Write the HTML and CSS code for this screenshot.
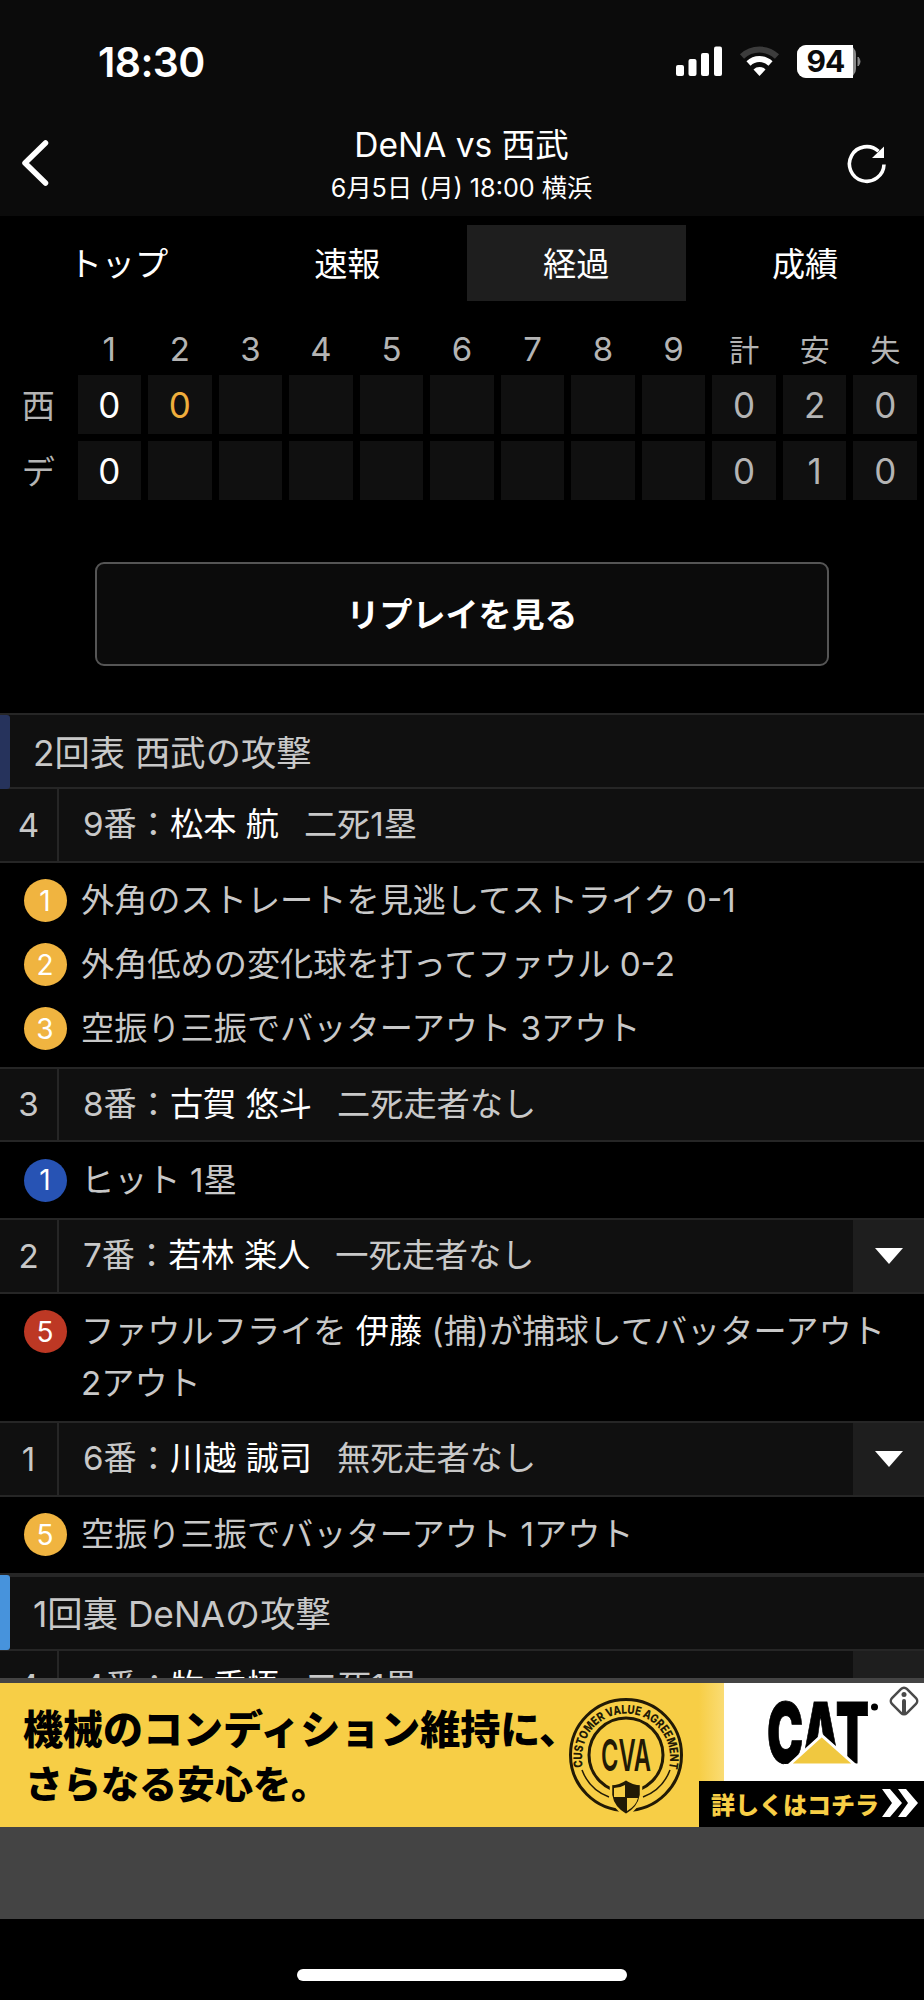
FILE: index.html
```
<!DOCTYPE html>
<html lang="ja">
<head>
    <meta charset="UTF-8">
    <meta name="viewport" content="width=device-width, initial-scale=1.0">
    <title>DeNA vs 西武 - 経過</title>
    <link rel="stylesheet" href="styles.css">
</head>
<body>
    <div class="screen">
        <header class="header">
            <div class="status-bar">
                <span class="clock">18:30</span>
                <svg class="status-icons" width="190" height="36" viewBox="0 0 190 36">
                    <!-- signal -->
                    <g fill="#fff">
                        <rect x="4" y="21" width="8" height="11" rx="2"/>
                        <rect x="16.5" y="15" width="8" height="17" rx="2"/>
                        <rect x="29" y="9" width="8" height="23" rx="2"/>
                        <rect x="42" y="2.5" width="8" height="29.5" rx="2"/>
                    </g>
                    <!-- wifi -->
                    <path d="M70 12.5a25.500 25.500 0 0 1 35 0" fill="none" stroke="#3c3c3c" stroke-width="6"/>
                    <path d="M76.500 19.500a16 16 0 0 1 22 0" fill="none" stroke="#fff" stroke-width="6"/>
                    <path d="M81.500 25.500a8.500 8.500 0 0 1 12 0l-6 6.500z" fill="#fff"/>
                    <!-- battery -->
                    <rect x="125" y="1" width="59" height="33" rx="9" fill="#8a8a8a"/>
                    <path d="M134 1h47v33h-47a9 9 0 0 1-9-9v-15a9 9 0 0 1 9-9z" fill="#fff"/>
                    <path d="M186 13q4 4.500 0 9z" fill="#8a8a8a" stroke="#8a8a8a"/>
                    <text class="battery-text" x="153.500" y="28" text-anchor="middle">94</text>
                </svg>
            </div>
            <div class="nav">
                <svg class="back" width="30" height="48" viewBox="0 0 30 48">
                    <path d="M25.500 4L5 24l20.500 20" fill="none" stroke="#fff" stroke-width="5.500" stroke-linecap="round" stroke-linejoin="round"/>
                </svg>
                <div class="nav-title">
                    <h1>DeNA vs 西武</h1>
                    <p>6月5日 (月) 18:00 横浜</p>
                </div>
                <svg class="reload" width="42" height="42" viewBox="0 0 42 42">
                    <path d="M38 21.500a17.300 17.300 0 1 1-5.500-13.200" fill="none" stroke="#fff" stroke-width="3.600"/>
                    <path d="M38 3.500v11.500H26z" fill="#fff"/>
                </svg>
            </div>
        </header>

        <nav class="tabs">
            <a class="tab">トップ</a>
            <a class="tab">速報</a>
            <a class="tab active">経過</a>
            <a class="tab">成績</a>
        </nav>

        <div class="score">
            <span></span>
            <span class="inning">1</span><span class="inning">2</span><span class="inning">3</span>
            <span class="inning">4</span><span class="inning">5</span><span class="inning">6</span>
            <span class="inning">7</span><span class="inning">8</span><span class="inning">9</span>
            <span class="inning kanji">計</span><span class="inning kanji">安</span><span class="inning kanji">失</span>

            <span class="team">西</span>
            <span class="cell run">0</span><span class="cell now">0</span><span class="cell"></span>
            <span class="cell"></span><span class="cell"></span><span class="cell"></span>
            <span class="cell"></span><span class="cell"></span><span class="cell"></span>
            <span class="cell">0</span><span class="cell">2</span><span class="cell">0</span>

            <span class="team">デ</span>
            <span class="cell run">0</span><span class="cell"></span><span class="cell"></span>
            <span class="cell"></span><span class="cell"></span><span class="cell"></span>
            <span class="cell"></span><span class="cell"></span><span class="cell"></span>
            <span class="cell">0</span><span class="cell">1</span><span class="cell">0</span>
        </div>

        <button class="replay">リプレイを見る</button>

        <main class="progress">
            <h2 class="half lions">2回表 西武の攻撃</h2>

            <div class="batter">
                <span class="order">4</span>
                <p class="info"><span class="num">9番</span>：<b>松本 航</b><span class="situation">二死1塁</span></p>
            </div>
            <ul class="pitches">
                <li><i class="ball strike">1</i><p>外角のストレートを見逃してストライク 0-1</p></li>
                <li><i class="ball strike">2</i><p>外角低めの変化球を打ってファウル 0-2</p></li>
                <li><i class="ball strike">3</i><p>空振り三振でバッターアウト 3アウト</p></li>
            </ul>

            <div class="batter">
                <span class="order">3</span>
                <p class="info"><span class="num">8番</span>：<b>古賀 悠斗</b><span class="situation">二死走者なし</span></p>
            </div>
            <ul class="pitches">
                <li><i class="ball hit">1</i><p>ヒット 1塁</p></li>
            </ul>

            <div class="batter">
                <span class="order">2</span>
                <p class="info"><span class="num">7番</span>：<b>若林 楽人</b><span class="situation">一死走者なし</span></p>
                <span class="toggle"></span>
            </div>
            <ul class="pitches">
                <li><i class="ball out">5</i><p>ファウルフライを <b>伊藤</b> (捕)が捕球してバッターアウト<br>2アウト</p></li>
            </ul>

            <div class="batter">
                <span class="order">1</span>
                <p class="info"><span class="num">6番</span>：<b>川越 誠司</b><span class="situation">無死走者なし</span></p>
                <span class="toggle"></span>
            </div>
            <ul class="pitches">
                <li><i class="ball strike">5</i><p>空振り三振でバッターアウト 1アウト</p></li>
            </ul>

            <h2 class="half baystars">1回裏 DeNAの攻撃</h2>
            <div class="batter">
                <span class="order">4</span>
                <p class="info"><span class="num">4番</span>：<b>牧 秀悟</b><span class="situation">二死1塁</span></p>
                <span class="toggle"></span>
            </div>
        </main>

        <aside class="ad">
            <div class="banner">
                <p class="copy">
                    <span class="copy-1">機械のコンディション維持に、</span>
                    <span class="copy-2">さらなる安心を。</span>
                </p>
                <svg class="cva" width="116" height="120" viewBox="0 0 116 120">
                    <defs>
                        <path id="arc" d="M15 70A44 44 0 1 1 101 70"/>
                    </defs>
                    <g fill="none" stroke="#221a05">
                        <circle cx="58" cy="58" r="55.500" stroke-width="3"/>
                        <circle cx="58" cy="58" r="37" stroke-width="3"/>
                        <path d="M14 73a46 46 0 0 0 27 27M102 73a46 46 0 0 1-27 27" stroke-width="1.500"/>
                    </g>
                    <text class="cva-ring"><textPath href="#arc" textLength="158" lengthAdjust="spacingAndGlyphs">CUSTOMER VALUE AGREEMENT</textPath></text>
                    <text class="cva-text" x="33" y="74" textLength="50" lengthAdjust="spacingAndGlyphs">CVA</text>
                    <path d="M58 82q7 5 15 5v11q-2 13-15 20-13-7-15-20v-11q8 0 15-5z" fill="#221a05" stroke="#f7ce46" stroke-width="2.500"/>
                    <path d="M57 88v12h-11v-9q6 0 11-3zM59 101h11q-2 8-11 13z" fill="#f7ce46"/>
                </svg>
                <div class="brand">
                    <svg class="cat" width="200" height="98" viewBox="0 0 200 98">
                        <text class="cat-text" x="43" y="80" textLength="102" lengthAdjust="spacingAndGlyphs">CAT</text>
                        <circle cx="150.500" cy="24" r="3.500" fill="#000"/>
                        <path d="M65 82L97.700 52.500L131 82z" fill="#f0c840" stroke="#fff" stroke-width="3"/>
                        <path d="M60 81h76v5h-76z" fill="#fff"/>
                        <rect x="169.500" y="7.500" width="21" height="21" rx="4" transform="rotate(45 180 18)" fill="#fff" stroke="#4a4a4a" stroke-width="2.500"/>
                        <circle cx="180" cy="11.500" r="2.500" fill="#4a4a4a"/>
                        <path d="M180 18v12" stroke="#4a4a4a" stroke-width="4" stroke-linecap="round"/>
                    </svg>
                    <div class="more">
                        <span>詳しくはコチラ</span>
                        <svg width="38" height="28" viewBox="0 0 38 28">
                            <path d="M0 0h8l12 14-12 14h-8l10-14zM16 0h8l12 14-12 14h-8l10-14z" fill="#fff"/>
                        </svg>
                    </div>
                </div>
            </div>
        </aside>

        <footer class="home"><div class="home-bar"></div></footer>
    </div>
</body>
</html>
```

FILE: styles.css
```
* {
    box-sizing: border-box;
}
body {
    margin: 0;
    background: #000;
    color: #c8c8c8;
    font-family: Inter, "Noto Sans CJK JP", sans-serif;
    font-size: 33.200px;
    font-weight: 395;
}
h1, h2, p, ul {
    margin: 0;
    padding: 0;
    font-weight: inherit;
}
.screen {
    width: 924px;
    height: 2000px;
    overflow: hidden;
    display: flex;
    flex-direction: column;
}
.header {
    height: 216px;
    flex: none;
    background: #0b0b0b;
    color: #fff;
}
.status-bar {
    height: 116px;
    padding: 44px 62px 0 98px;
    display: flex;
    justify-content: space-between;
    align-items: flex-start;
}
.clock {
    font-size: 41px;
    font-weight: 600;
    line-height: 36px;
    letter-spacing: -0.600px;
}
.battery-text {
    font-size: 30px;
    font-weight: 700;
    letter-spacing: -1px;
    fill: #0b0b0b;
}
.nav {
    height: 100px;
    padding: 0 36px 0 20px;
    display: flex;
    justify-content: space-between;
    align-items: flex-start;
}
.back {
    margin-top: 23px;
}
.reload {
    margin-top: 27px;
}
.nav-title {
    text-align: center;
    padding-left: 27px;
}
.nav-title h1 {
    font-size: 33.500px;
    line-height: 44px;
    margin-top: 7px;
}
.nav-title p {
    font-size: 25.200px;
    line-height: 43px;
}
.tabs {
    flex: none;
    height: 85px;
    padding: 9px 9.500px 0 9px;
    display: grid;
    grid-template-columns: repeat(4, 1fr);
    gap: 10px;
    color: #fff;
}
.tab {
    padding-bottom: 3px;
    display: flex;
    align-items: center;
    justify-content: center;
}
.tab.active {
    background: #1e1e1e;
}
.score {
    flex: none;
    width: 917px;
    margin-top: 32px;
    display: grid;
    grid-template-columns: 70.500px repeat(12, 1fr);
    grid-template-rows: 35px 59px 59px;
    gap: 7px;
    color: #b4b4b4;
}
.inning, .team, .cell {
    display: flex;
    align-items: center;
    justify-content: center;
}
.inning {
    padding-bottom: 4px;
    font-size: 33px;
}
.inning.kanji {
    padding-bottom: 6px;
    font-size: 30px;
}
.team {
    padding: 0 0 2px 6px;
}
.cell {
    background: #101010;
    font-size: 35px;
    font-weight: 400;
}
.cell.run {
    color: #fff;
}
.cell.now {
    color: #f0ae3c;
}
.replay {
    flex: none;
    width: 734px;
    height: 104px;
    margin: 62px auto 47px 95px;
    padding-bottom: 4px;
    background: #0b0b0b;
    border: 2px solid #555;
    border-radius: 9px;
    color: #fff;
    font-family: inherit;
    font-size: 33px;
    font-weight: 700;
}
.progress {
    height: 965px;
    flex: none;
    overflow: hidden;
}
.half {
    height: 74px;
    padding: 0 0 2px 33px;
    display: flex;
    align-items: center;
    font-size: 35.300px;
    background: #101010;
    border-top: 2px solid #262626;
    position: relative;
}
.half::before {
    content: "";
    position: absolute;
    left: 0;
    top: 0;
    width: 10px;
    height: 74px;
    border-radius: 0 3px 3px 0;
}
.half.lions::before {
    background: #26335c;
}
.half.baystars {
    height: 76px;
    border-top-width: 4px;
}
.half.baystars::before {
    top: -2px;
    height: 75px;
    background: #4793dc;
}
.batter {
    height: 75.500px;
    display: flex;
    background: #101010;
    border: solid #262626;
    border-width: 2px 0;
}
.order {
    width: 59px;
    border-right: 2px solid #262626;
    display: flex;
    align-items: center;
    justify-content: center;
}
.info {
    flex: 1;
    padding-left: 24px;
    line-height: 71px;
    white-space: nowrap;
}
b {
    font-weight: inherit;
    color: #fff;
}
.situation {
    margin-left: 25px;
}
.toggle {
    width: 71px;
    background: #1e1e1e;
    display: flex;
    align-items: center;
    justify-content: center;
}
.toggle::before {
    content: "";
    border: solid transparent;
    border-width: 16px 14px 0;
    border-top-color: #fff;
}
.pitches {
    list-style: none;
    padding: 12.500px 0 12px;
}
.pitches li {
    display: flex;
    padding-left: 23.500px;
    margin-bottom: 12.500px;
}
.pitches li:last-child {
    margin-bottom: 0;
}
.pitches p {
    line-height: 51.500px;
    white-space: nowrap;
}
.ball {
    flex: none;
    width: 43px;
    height: 43px;
    margin: 4px 14.500px 0 0;
    border-radius: 50%;
    display: flex;
    align-items: center;
    justify-content: center;
    color: #fff;
    font-size: 28px;
    font-style: normal;
}
.strike {
    background: #f0b440;
}
.hit {
    background: #2753b4;
}
.out {
    background: #bd3824;
}
.ad {
    flex: none;
    height: 241px;
    padding-top: 5px;
    background: #444;
}
.banner {
    height: 144px;
    background: #f7ce46;
    display: flex;
    color: #000;
}
.copy {
    width: 568px;
    padding: 20px 0 0 23px;
    font-weight: 900;
    white-space: nowrap;
}
.copy span {
    display: block;
    line-height: 54px;
}
.copy-1 {
    font-size: 40px;
}
.copy .copy-2 {
    font-size: 38px;
    padding-left: 2px;
}
.cva {
    flex: none;
    margin-top: 14px;
}
.cva-ring {
    font-size: 12px;
    font-weight: 800;
    fill: #221a05;
}
.cva-text {
    font-size: 44px;
    font-weight: 600;
    fill: #221a05;
}
.brand {
    flex: 1;
    margin-left: 15px;
    display: flex;
    flex-direction: column;
    background: linear-gradient(90deg, #f7ce46, #fadc74 25px, #fff 25px);
}
.cat {
    margin-left: 25px;
}
.cat-text {
    font-size: 84px;
    font-weight: 900;
    stroke: #000;
    stroke-width: 1px;
}
.more {
    height: 46px;
    padding: 0 0 2px 12px;
    display: flex;
    align-items: center;
    gap: 3px;
    background: #000;
    color: #f7ce46;
    font-size: 24px;
    font-weight: 900;
    white-space: nowrap;
}
.home {
    flex: 1;
    padding-top: 50px;
}
.home-bar {
    width: 330px;
    height: 12px;
    margin: 0 auto;
    border-radius: 6px;
    background: #fff;
}
```
